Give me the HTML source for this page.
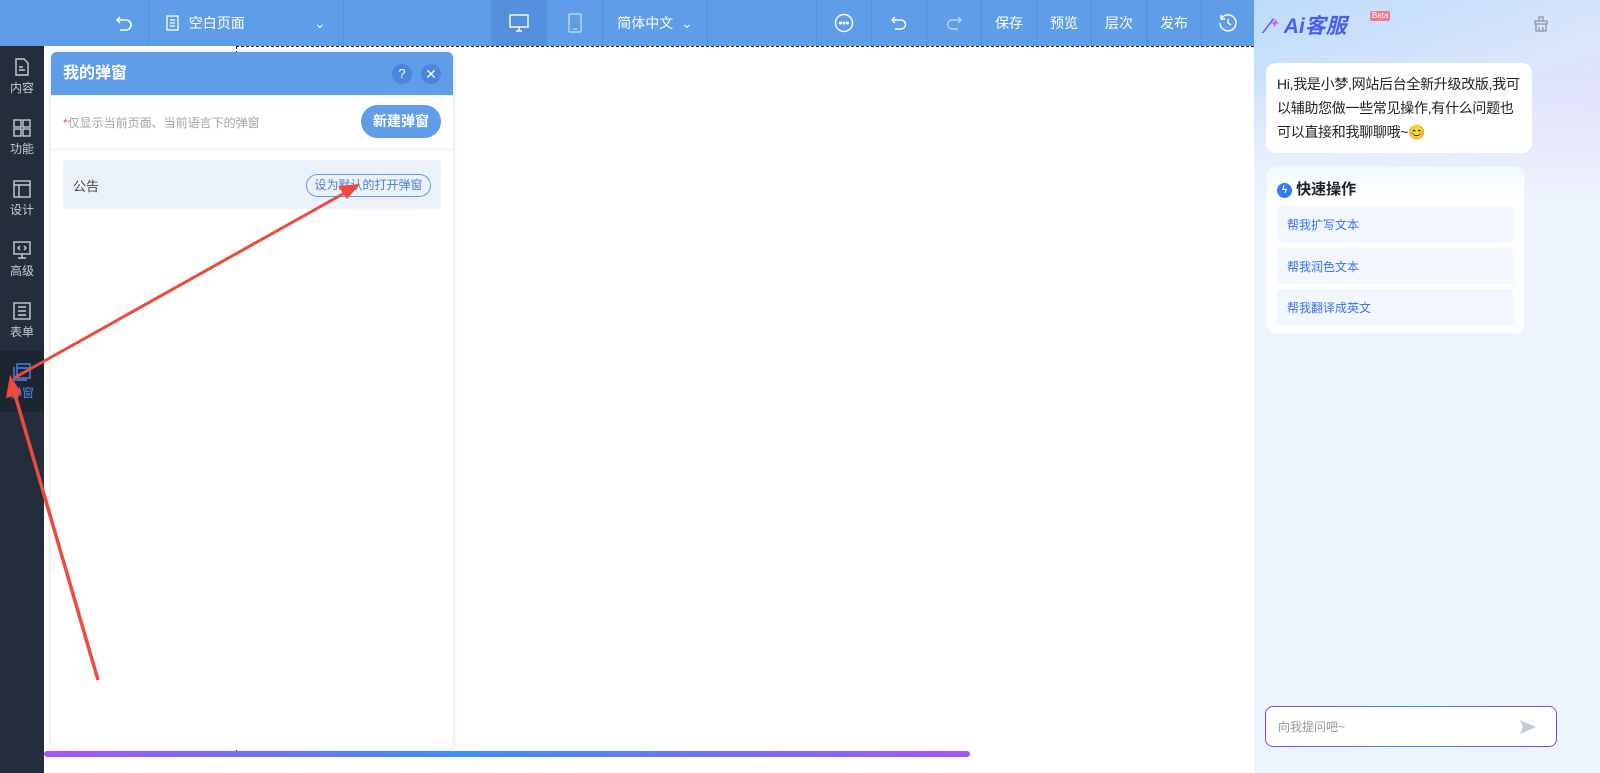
<!DOCTYPE html>
<html><head><meta charset="utf-8"><style>
*{margin:0;padding:0;box-sizing:border-box}
body{width:1600px;height:773px;overflow:hidden;position:relative;background:#fff;font-family:"Liberation Sans","Noto Sans CJK SC",sans-serif;font-size:13px}
.top{position:absolute;left:0;top:0;width:1254px;height:46px;background:#5f9de8;color:#fff}
.top .c{position:absolute;top:0;height:46px;display:flex;align-items:center;justify-content:center;border-left:1px solid #5690db;font-size:14px}
.side{position:absolute;left:0;top:46px;width:44px;height:727px;background:#232d3b}
.side .it{height:61px;display:flex;flex-direction:column;align-items:center;justify-content:center;color:#c8ccd2;font-size:12px;gap:3px}
.side .it.act{background:#1d2530;color:#4a86ee}
.panel{position:absolute;left:51px;top:52px;width:402px;height:698px;background:#fff;border-radius:6px;box-shadow:0 0 6px rgba(0,0,0,.15);overflow:hidden}
.ph{height:43px;background:#5f9de8;color:#fff;font-size:16px;font-weight:bold;padding:0 12px;line-height:43px;position:relative}
.right{position:absolute;left:1254px;top:0;width:346px;height:773px;background:#eef4fd}
</style></head><body>
<div class="top">
 <div class="c" style="left:100px;width:48px;border:none"><svg width="18" height="18" viewBox="0 0 18 18" fill="none" stroke="#fff" stroke-width="1.5"><path d="M5 3 L2 6 L5 9 M2 6 H11 A5 5 0 0 1 11 16 H5"/></svg></div>
 <div class="c" style="left:148px;width:195px;justify-content:flex-start;padding-left:16px"><svg width="16" height="16" viewBox="0 0 16 16" fill="none" stroke="#fff" stroke-width="1.3"><rect x="2" y="1" width="11" height="14"/><path d="M5 5h5M5 8h5M5 11h5"/></svg>&nbsp;&nbsp;空白页面<span style="position:absolute;left:165px">⌄</span></div>
 <div class="c" style="left:343px;width:148px"></div>
 <div class="c" style="left:491px;width:55px;background:#5490de"><svg width="20" height="18" viewBox="0 0 20 18" fill="none" stroke="#fff" stroke-width="1.4"><rect x="1" y="1" width="18" height="12"/><path d="M7 17h6M10 13v4"/></svg></div>
 <div class="c" style="left:546px;width:56px"><svg width="14" height="20" viewBox="0 0 14 20" fill="none" stroke="#c8dcf6" stroke-width="1.3"><rect x="1" y="1" width="12" height="18" rx="1"/><path d="M5 16h4"/></svg></div>
 <div class="c" style="left:602px;width:105px">简体中文&nbsp;&nbsp;⌄</div>
 <div class="c" style="left:707px;width:109px"></div>
 <div class="c" style="left:816px;width:55px"><svg width="20" height="20" viewBox="0 0 20 20" fill="none" stroke="#fff" stroke-width="1.4"><circle cx="10" cy="10" r="8.5"/><circle cx="6.5" cy="10" r=".8" fill="#fff"/><circle cx="10" cy="10" r=".8" fill="#fff"/><circle cx="13.5" cy="10" r=".8" fill="#fff"/></svg></div>
 <div class="c" style="left:871px;width:55px"><svg width="18" height="16" viewBox="0 0 18 16" fill="none" stroke="#fff" stroke-width="1.4"><path d="M5 2L2 5l3 3M2 5h9a4.5 4.5 0 0 1 0 9H5"/></svg></div>
 <div class="c" style="left:926px;width:55px"><svg width="18" height="16" viewBox="0 0 18 16" fill="none" stroke="#b9d3f4" stroke-width="1.4"><path d="M13 2l3 3-3 3M16 5H7a4.5 4.5 0 0 0 0 9h6"/></svg></div>
 <div class="c" style="left:981px;width:55px">保存</div>
 <div class="c" style="left:1036px;width:55px">预览</div>
 <div class="c" style="left:1091px;width:55px">层次</div>
 <div class="c" style="left:1146px;width:55px">发布</div>
 <div class="c" style="left:1201px;width:53px"><svg width="20" height="20" viewBox="0 0 20 20" fill="none" stroke="#fff" stroke-width="1.4"><path d="M3 6A8 8 0 1 1 2 10M3 2v4h4M10 6v4l3 2"/></svg></div>
</div>
<div style="position:absolute;left:236px;top:46px;width:1018px;border-top:1px dashed #222"></div>
<div style="position:absolute;left:236px;top:46px;height:705px;border-left:1px dashed #222"></div>
<div class="side">
 <div class="it"><svg width="18" height="18" viewBox="0 0 18 18" fill="none" stroke="#c8ccd2" stroke-width="1.4"><path d="M3 1h8l4 4v12H3z M6 9h4M6 12h6"/></svg>内容</div>
 <div class="it"><svg width="18" height="18" viewBox="0 0 18 18" fill="none" stroke="#c8ccd2" stroke-width="1.4"><rect x="1" y="1" width="7" height="7"/><rect x="10" y="1" width="7" height="7"/><rect x="1" y="10" width="7" height="7"/><rect x="10" y="10" width="7" height="7"/></svg>功能</div>
 <div class="it"><svg width="18" height="18" viewBox="0 0 18 18" fill="none" stroke="#c8ccd2" stroke-width="1.4"><rect x="1" y="1" width="16" height="16"/><path d="M1 5h16M6 5v12"/></svg>设计</div>
 <div class="it"><svg width="18" height="18" viewBox="0 0 18 18" fill="none" stroke="#c8ccd2" stroke-width="1.4"><rect x="1" y="1" width="16" height="12"/><path d="M9 13v4M5 17h8M7 5L5 7l2 2M11 5l2 2-2 2"/></svg>高级</div>
 <div class="it"><svg width="18" height="18" viewBox="0 0 18 18" fill="none" stroke="#c8ccd2" stroke-width="1.4"><rect x="1" y="1" width="16" height="16"/><path d="M5 5h8M5 9h8M5 13h8"/></svg>表单</div>
 <div class="it act"><svg width="18" height="18" viewBox="0 0 18 18" fill="none" stroke="#4a86ee" stroke-width="1.4"><rect x="4" y="1" width="13" height="14"/><path d="M4 5h13M1 4v13h13"/></svg>弹窗</div>
</div>
<div class="panel">
 <div class="ph">我的弹窗
  <span style="position:absolute;left:341px;top:12px;width:20px;height:20px;border-radius:50%;background:#4a86dc;font-size:13px;font-weight:normal;text-align:center;line-height:20px">?</span>
  <span style="position:absolute;left:370px;top:12px;width:20px;height:20px;border-radius:50%;background:#4a86dc;font-size:14px;font-weight:normal;text-align:center;line-height:20px">✕</span></div>
 <div style="height:53px;box-shadow:0 2px 4px rgba(0,0,0,.06);position:relative">
  <span style="position:absolute;left:12px;top:19px;color:#a0a4aa;font-size:12px"><span style="color:#e55">*</span>仅显示当前页面、当前语言下的弹窗</span>
  <span style="position:absolute;left:310px;top:10px;width:80px;height:33px;border-radius:17px;background:#5f9de8;color:#fff;font-size:14px;font-weight:bold;text-align:center;line-height:33px">新建弹窗</span>
 </div>
 <div style="position:absolute;left:12px;top:108px;width:378px;height:49px;background:#ebf2fc;border-radius:3px">
  <span style="position:absolute;left:10px;top:16px;color:#444">公告</span>
  <span style="position:absolute;left:243px;top:14px;width:125px;height:23px;border:1px solid #5f9de8;border-radius:12px;color:#4a7fd0;font-size:12px;text-align:center;line-height:21px">设为默认的打开弹窗</span>
 </div>
</div>
<div style="position:absolute;left:44px;top:751px;width:926px;height:6px;border-radius:3px;background:linear-gradient(90deg,#a855f7,#3d8ff7 45%,#a855f7)"></div>
<div class="right">
 <div style="position:absolute;left:0;top:0;width:346px;height:200px;background:linear-gradient(160deg,#bcdcfb,#dbe6fb 50%,#e6d8fb);-webkit-mask-image:linear-gradient(#000 40%,transparent);mask-image:linear-gradient(#000 40%,transparent)"></div>
 <div style="position:absolute;left:12px;top:10px;font-size:21px;font-weight:bold;font-style:italic;color:#4a5ef0;white-space:nowrap"><span style="color:#6a5ef0">⁄</span><span style="font-size:11px;color:#d65ff0;vertical-align:6px">✦</span> Ai客服</div>
 <span style="position:absolute;left:116px;top:11px;background:#f27b8c;color:#fff;font-size:8px;line-height:10px;padding:0 2px;border-radius:2px">Beta</span>
 <svg style="position:absolute;left:279px;top:16px" width="16" height="16" viewBox="0 0 16 16" fill="none" stroke="#8a94a8" stroke-width="1.3"><path d="M6 1h4v4H6zM2 5h12v3H2zM3 8v7h10V8M6 11v4M10 11v4"/></svg>
 <div style="position:absolute;left:12px;top:63px;width:266px;height:90px;background:#fff;border-radius:10px;padding:9px 6px 9px 11px;font-size:14px;line-height:24px;color:#222;letter-spacing:-0.3px">Hi,我是小梦,网站后台全新升级改版,我可以辅助您做一些常见操作,有什么问题也可以直接和我聊聊哦~😊</div>
 <div style="position:absolute;left:12px;top:166px;width:259px;height:168px;background:linear-gradient(#eefaff,#fff 30px);border-radius:10px;border:1px solid #f0f6fd">
  <div style="position:absolute;left:10px;top:11px;font-size:15px;font-weight:bold;color:#222"><span style="display:inline-block;width:15px;height:15px;border-radius:50%;background:#2f7df5;color:#fff;font-size:10px;text-align:center;line-height:15px;vertical-align:1px">ϟ</span> 快速操作</div>
  <div style="position:absolute;left:10px;top:39px;width:237px;height:36px;background:#f2f6fd;border-radius:4px;padding:10px;font-size:12px;color:#3b72e8">帮我扩写文本</div>
  <div style="position:absolute;left:10px;top:81px;width:237px;height:36px;background:#f2f6fd;border-radius:4px;padding:10px;font-size:12px;color:#3b72e8">帮我润色文本</div>
  <div style="position:absolute;left:10px;top:122px;width:237px;height:36px;background:#f2f6fd;border-radius:4px;padding:10px;font-size:12px;color:#3b72e8">帮我翻译成英文</div>
 </div>
 <div style="position:absolute;left:11px;top:706px;width:292px;height:41px;border-radius:8px;padding:1px;background:linear-gradient(90deg,#8a3df5,#2a9df5,#8a3df5)"><div style="width:100%;height:100%;background:#fff;border-radius:7px;position:relative"><span style="position:absolute;left:12px;top:11px;font-size:12px;color:#999">向我提问吧~</span><svg style="position:absolute;left:254px;top:12px" width="16" height="16" viewBox="0 0 16 16"><path d="M0 1L16 8 0 15 3 8z" fill="#c5cbd6"/></svg></div></div>
</div>
<svg style="position:absolute;left:0;top:0" width="1600" height="773">
 <path d="M14 378L350 190" stroke="#ee4a3c" stroke-width="3"/>
 <path d="M360 184L338 186 347 199z" fill="#ee4a3c"/>
 <path d="M98 680L13 388" stroke="#ee4a3c" stroke-width="3.5"/>
 <path d="M10 375L6 398 22 394z" fill="#ee4a3c"/>
</svg>
</body></html>
